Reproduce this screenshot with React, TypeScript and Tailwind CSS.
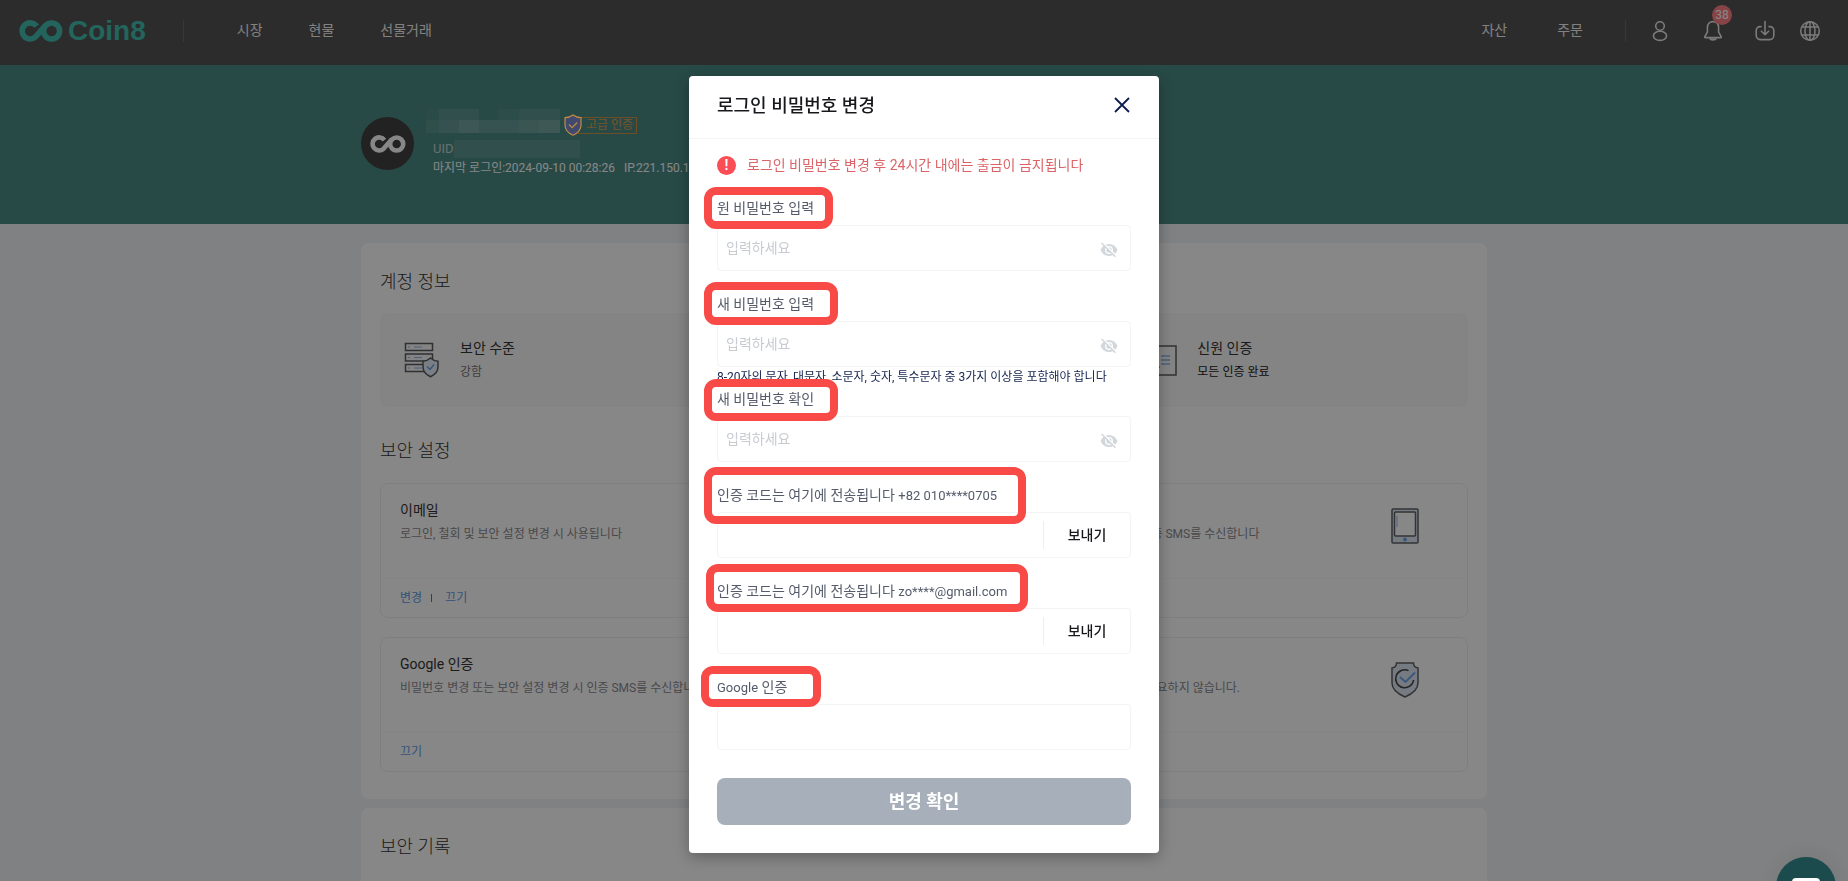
import { ReactNode, useState } from "react";

const passwordFields = [
  {
    id: "old-password",
    label: "원 비밀번호 입력",
    mark: "left-[-13px] top-[-11px] w-[129px] h-[42px]",
  },
  {
    id: "new-password",
    label: "새 비밀번호 입력",
    hint: "8-20자의 문자, 대문자, 소문자, 숫자, 특수문자 중 3가지 이상을 포함해야 합니다",
    mark: "left-[-13px] top-[-12px] w-[134px] h-[43px]",
  },
  {
    id: "confirm-password",
    label: "새 비밀번호 확인",
    mark: "left-[-13px] top-[-10px] w-[134px] h-[42px]",
  },
];

const codeFields = [
  {
    id: "sms-code",
    target: "+82 010****0705",
    mark: "left-[-13px] top-[-18px] w-[322px] h-[57px]",
  },
  {
    id: "email-code",
    target: "zo****@gmail.com",
    mark: "left-[-11px] top-[-17px] w-[322px] h-[48px]",
  },
];

const securityCards = [
  {
    title: "이메일",
    description: "로그인, 철회 및 보안 설정 변경 시 사용됩니다",
    actions: ["변경", "끄기"],
    icon: null,
  },
  {
    title: "휴대폰",
    description: "비밀번호 변경 또는 보안 설정 변경 시 인증 SMS를 수신합니다",
    actions: [],
    icon: "tablet",
  },
  {
    title: "Google 인증",
    description: "비밀번호 변경 또는 보안 설정 변경 시 인증 SMS를 수신합니다",
    actions: ["끄기"],
    icon: null,
  },
  {
    title: "로그인 비밀번호",
    description: "비밀번호는 로그인할 때 쓰이며 인증은 필요하지 않습니다.",
    actions: [],
    icon: "shield",
  },
];

const LogoMark = ({ className }: { className?: string }) => (
  <svg viewBox="0 0 44 22" className={className} fill="none" stroke="currentColor" strokeWidth="5.6">
    <path d="M17.6 6.2A8 8 0 1 0 16.8 16.6L26.4 5.4" strokeLinejoin="round" />
    <circle cx="32.6" cy="11" r="8" />
  </svg>
);

const UserIcon = () => (
  <svg viewBox="0 0 16 22" className="h-[22px] w-4" fill="none" stroke="currentColor" strokeWidth="1.6">
    <circle cx="8" cy="6" r="4.3" />
    <ellipse cx="8" cy="15.8" rx="6.6" ry="4.6" />
  </svg>
);

const BellIcon = () => (
  <svg viewBox="0 0 20 22" className="h-[22px] w-5" fill="none" stroke="currentColor" strokeWidth="1.6" strokeLinejoin="round">
    <path d="M10 1.6c-3.6 0-5.6 2.6-5.6 6v4.6L1.8 16.6c-.3.6 0 1 .6 1h15.2c.6 0 .9-.4.6-1l-2.6-4.4V7.6c0-3.4-2-6-5.600-6z" />
    <path d="M6.600 18.400c1 2.200 5.800 2.200 6.800 0" fill="currentColor" />
  </svg>
);

const DownloadIcon = () => (
  <svg viewBox="0 0 20 22" className="h-[22px] w-5" fill="none" stroke="currentColor" strokeWidth="1.6" strokeLinecap="round">
    <path d="M6 6.600H5a3.800 3.800 0 0 0-3.800 3.800v5.200A4 4 0 0 0 5.200 19.600h9.600a4 4 0 0 0 4-4v-5.200A3.800 3.800 0 0 0 15 6.600h-1" />
    <path d="M10 1.500v13M6.400 11.200l3.600 3.500 3.600-3.500" />
  </svg>
);

const GlobeIcon = () => (
  <svg viewBox="0 0 22 22" className="h-[22px] w-[22px]" fill="none" stroke="currentColor" strokeWidth="1.5">
    <circle cx="11" cy="11" r="9.300" />
    <ellipse cx="11" cy="11" rx="5" ry="9.300" />
    <path d="M2.600 7h16.800M2.600 15h16.800M11 1.700v18.600" />
  </svg>
);

const EyeOffIcon = () => (
  <svg viewBox="0 0 18 18" className="h-[18px] w-[18px]">
    <path d="M.5 9C2.200 5 5.300 3 9 3s6.800 2 8.500 6c-1.700 4-4.800 6-8.500 6S2.200 13 .5 9z" fill="currentColor" />
    <circle cx="9" cy="9" r="3.300" fill="none" stroke="#fff" strokeWidth="1.300" />
    <path d="M2.600 1.200l13.800 13.800" stroke="#fff" strokeWidth="1.500" />
    <path d="M1.600 2l13.800 13.800" stroke="currentColor" strokeWidth="1.500" />
  </svg>
);

const ServerIcon = () => (
  <svg viewBox="0 0 36 36" className="h-9 w-9" fill="none" stroke="#5c5c60" strokeWidth="1.500">
    <path d="M1.500 1.500h27v7h-27zM1.500 12h27v7h-27zM1.500 22.500h27v7h-27z" />
    <path d="M4 5h2M10 5h8M4 15.500h2M10 15.500h8M4 26h2M10 26h8" stroke="#8fb3e8" strokeWidth="1" />
    <path d="M26.500 16c2 2 4.500 3 7.500 3.200v5.300c0 5-3.500 8.500-7.500 10.200-4-1.700-7.500-5.200-7.500-10.200v-5.300c3-.2 5.500-1.200 7.500-3.200z" fill="#e6eefb" />
    <path d="M23 24.500l3 3 4-5" stroke="#6ea3ea" />
  </svg>
);

const IdCardIcon = () => (
  <svg viewBox="0 0 36 36" className="h-9 w-9" fill="none" stroke="#5c5c60" strokeWidth="1.500">
    <path d="M1 4h34v29H1z" />
    <circle cx="11" cy="14" r="4" />
    <path d="M4 26c0-8 14-8 14 0" />
    <path d="M20 14h9M20 18h9M20 22h9" stroke="#8fb3e8" />
  </svg>
);

const TabletIcon = () => (
  <svg viewBox="0 0 28 36" className="h-9 w-7" fill="none" stroke="#606166" strokeWidth="1.500">
    <rect x="1" y="1" width="26" height="34" rx="1" fill="#dfe7f3" />
    <rect x="3.500" y="4" width="21" height="24" rx="1" fill="#fff" />
    <path d="M6 8v11" stroke="#8fb3e8" strokeWidth="1" />
    <circle cx="14" cy="31.500" r="1.200" fill="#6ea3ea" stroke="#6ea3ea" />
  </svg>
);

const ShieldIcon = () => (
  <svg viewBox="0 0 28 36" className="h-9 w-7" fill="none" stroke="#606166" strokeWidth="1.500">
    <path d="M5.500 1h17c0 3 2 4.600 4.500 5v15c0 6-6 11-13 14C7 32 1 27 1 21V6c2.500-.4 4.500-2 4.500-5z" fill="#dfe7f3" />
    <path d="M17.500 8.600A9 9 0 1 0 22.600 18" stroke="#45464a" />
    <path d="M9 15l5.500 5L24 10.500" stroke="#6ea3ea" strokeWidth="1.800" />
  </svg>
);

const SecurityCard = ({ card }: { card: (typeof securityCards)[number] }) => (
  <article className="flex h-[135px] flex-col rounded-lg border border-[#efefef]">
    <div className="flex h-[95px] justify-between border-b border-[#fafafa] pl-[19px] pr-12">
      <div className="pt-4">
        <h3 className="text-sm leading-5 text-[#333]">{card.title}</h3>
        <p className="mt-1 whitespace-nowrap text-xs leading-5 text-[#8b8b90]">{card.description}</p>
      </div>
      <div className="pt-6">
        {card.icon === "tablet" && <TabletIcon />}
        {card.icon === "shield" && <ShieldIcon />}
      </div>
    </div>
    <div className="flex flex-1 items-center pl-[19px] text-xs text-[#5f9ae8]">
      {card.actions.map((action, i) => (
        <div key={action} className="flex items-center">
          {i > 0 && <span className="ml-[9px] mr-[13px] h-2 w-px bg-[#77777b]" />}
          <button type="button">{action}</button>
        </div>
      ))}
    </div>
  </article>
);

const FieldLabel = ({ htmlFor, mark, children }: { htmlFor: string; mark: string; children: ReactNode }) => (
  <div className="relative mb-[7px] h-5 w-fit">
    <label htmlFor={htmlFor} className="block whitespace-nowrap text-sm leading-5 text-[#555b6a]">
      {children}
    </label>
    <span className={`pointer-events-none absolute z-10 rounded-xl border-8 border-[#f84b47] ${mark}`} />
  </div>
);

const PasswordModal = () => {
  const [visible, setVisible] = useState<{ [key: string]: boolean }>({});

  return (
    <div className="fixed inset-0 flex items-start justify-center bg-black/47 pt-[76px]">
      <div role="dialog" aria-labelledby="modal-title" className="w-[470px] rounded bg-white shadow-[0_4px_16px_rgba(0,0,0,0.3)]">
        <div className="flex h-[63px] items-center justify-between border-b border-[#f3f4f5] pb-0.5 pl-7 pr-7">
          <h2 id="modal-title" className="text-lg font-medium text-[#17181c]">로그인 비밀번호 변경</h2>
          <button type="button" aria-label="닫기" className="pb-0.5 text-[#0e1c50]">
            <svg viewBox="0 0 18 18" className="h-[18px] w-[18px]" fill="none" stroke="currentColor" strokeWidth="1.800">
              <path d="M2 2l14 14M16 2L2 16" />
            </svg>
          </button>
        </div>

        <form className="px-7 pb-7 pt-4" onSubmit={(e) => e.preventDefault()}>
          <div className="mb-[23px] flex h-5 items-center gap-[11px] text-sm leading-5 text-[#dc6468]">
            <span className="flex h-[19px] w-[19px] items-center justify-center rounded-full bg-[#fa4d56] font-bold text-white">!</span>
            로그인 비밀번호 변경 후 24시간 내에는 출금이 금지됩니다
          </div>

          {passwordFields.map((field) => (
            <div key={field.id} className={field.hint ? "mb-0.5" : "mb-[23px]"}>
              <FieldLabel htmlFor={field.id} mark={field.mark}>{field.label}</FieldLabel>
              <div className="flex h-[46px] items-center rounded border border-[#f3f4f5] pl-2 pr-3">
                <input
                  id={field.id}
                  type={visible[field.id] ? "text" : "password"}
                  placeholder="입력하세요"
                  className="min-w-0 flex-1 text-sm leading-5 text-[#333] outline-none placeholder:text-[#c8ccd1]"
                />
                <button
                  type="button"
                  aria-label="비밀번호 표시"
                  className="pt-1 text-[#d2d7dc]"
                  onClick={() => setVisible((prev) => ({ ...prev, [field.id]: !prev[field.id] }))}
                >
                  <EyeOffIcon />
                </button>
              </div>
              {field.hint && <p className="whitespace-nowrap text-xs leading-5 text-[#14234f]">{field.hint}</p>}
            </div>
          ))}

          {codeFields.map((field) => (
            <div key={field.id} className="mb-[23px]">
              <FieldLabel htmlFor={field.id} mark={field.mark}>
                인증 코드는 여기에 전송됩니다 <span className="text-[13px]">{field.target}</span>
              </FieldLabel>
              <div className="flex h-[46px] items-center rounded border border-[#f3f4f5]">
                <input id={field.id} type="text" className="min-w-0 flex-1 px-2 text-sm outline-none" />
                <button type="button" className="h-7 w-[87px] border-l border-[#eceeef] text-sm font-medium text-[#17181c]">
                  보내기
                </button>
              </div>
            </div>
          ))}

          <FieldLabel htmlFor="google-code" mark="left-[-16px] top-[-11px] w-[120px] h-[41px]">
            <span className="text-[13px]">Google</span> 인증
          </FieldLabel>
          <input
            id="google-code"
            type="text"
            className="block h-[46px] w-full rounded border border-[#f3f4f5] px-2 text-sm outline-none"
          />

          <button type="submit" className="mt-7 h-[47px] w-full rounded-lg bg-[#a7b0ba] text-lg font-bold text-white">
            변경 확인
          </button>
        </form>
      </div>
    </div>
  );
};

export default function App() {
  return (
    <div className="h-screen overflow-hidden bg-[#f1f3f5] font-['Roboto','Noto_Sans_CJK_KR',sans-serif]">
      <header className="flex h-[65px] items-center bg-[#535353] pb-1 pl-[19px] pr-[27px] text-sm text-[#f3f3f3]">
        <a href="#" className="flex items-center gap-[5px] text-[#42bfb0]">
          <LogoMark className="h-[22px] w-11" />
          <span className="font-['Liberation_Sans',sans-serif] text-[28px] font-bold leading-8">Coin8</span>
        </a>
        <span className="ml-[37px] h-[22px] w-px bg-[#6b6b6b]" />
        <nav className="ml-[53px] flex gap-[46px] pb-0.5">
          <a href="#">시장</a>
          <a href="#">현물</a>
          <a href="#">선물거래</a>
        </nav>
        <nav className="ml-auto flex gap-[50px] pb-0.5">
          <a href="#">자산</a>
          <a href="#">주문</a>
        </nav>
        <span className="ml-[42px] h-[22px] w-px bg-[#6b6b6b]" />
        <div className="ml-[26px] flex items-center text-[#e8e8e8]">
          <button type="button" aria-label="사용자"><UserIcon /></button>
          <button type="button" aria-label="알림" className="relative ml-[35px]">
            <BellIcon />
            <span className="absolute left-[9px] top-[-15px] flex h-5 w-5 items-center justify-center rounded-full bg-[#ff7f82] text-xs text-white">
              38
            </span>
          </button>
          <button type="button" aria-label="다운로드" className="ml-8"><DownloadIcon /></button>
          <button type="button" aria-label="언어" className="ml-6"><GlobeIcon /></button>
        </div>
      </header>

      <section className="h-[159px] bg-[#4b8c86]">
        <div className="mx-auto flex w-full max-w-[1126px] pt-11">
          <div className="mt-2 flex h-[53px] w-[53px] items-center justify-center rounded-full bg-[#414141] text-[#fff]">
            <LogoMark className="h-[18px] w-9" />
          </div>
          <div className="ml-3">
            <div className="flex h-6">
              {/* masked account name */}
              <div className="grid h-6 w-[134px] grid-cols-[13px_20px_20px_20px_20px_20px_21px] grid-rows-[11px_13px]">
                <span className="bg-white/3" />
                <span className="bg-white/10" />
                <span className="bg-white/10" />
                <span />
                <span className="bg-white/6" />
                <span className="bg-white/10" />
                <span className="bg-white/10" />
                <span className="bg-white/8" />
                <span className="bg-white/14" />
                <span className="bg-white/22" />
                <span className="bg-white/16" />
                <span className="bg-white/16" />
                <span className="bg-white/20" />
                <span className="bg-white/24" />
              </div>
              <div className="ml-1 mt-2 flex items-center">
                <svg viewBox="0 0 18 22" className="z-10 h-[22px] w-[18px]" fill="#414a6e" stroke="#c08a45" strokeWidth="1.200">
                  <path d="M9 1c2 1.600 5 2.600 8 2.600V11c0 5-4 8.500-8 10.200C5 19.500 1 16 1 11V3.600C4 3.600 7 2.600 9 1z" />
                  <path d="M5 10.500l3.200 3.200 5-5.200" fill="none" />
                </svg>
                <span className="-ml-1 flex h-[17px] items-center whitespace-nowrap border border-[#d09446] pl-[7px] pr-[3px] text-xs text-[#e0a050]">
                  고급 인증
                </span>
              </div>
            </div>
            <div className="mt-[7px] flex h-[18px] items-center pl-[7px] text-[13px] text-[#c3d3d1]">
              UID
              <span className="h-[18px] w-[126px] bg-white/10" />
            </div>
            <p className="whitespace-pre pl-[7px] text-xs leading-5 text-white">
              마지막 로그인:2024-09-10 00:28:26{"  "} IP.221.150.10.24
            </p>
          </div>
        </div>
      </section>

      <main className="mx-auto mt-[19px] w-full max-w-[1126px]">
        <section className="rounded-lg bg-white px-[19px] pb-[27px] pt-[25px]">
          <h2 className="text-lg font-light leading-7 text-[#333]">계정 정보</h2>
          <div className="mt-[17px] grid h-[94px] grid-cols-3 items-center gap-x-[42px] rounded-lg bg-[#f9f9f9] pl-6">
            <div className="flex items-center gap-5">
              <ServerIcon />
              <div>
                <h3 className="text-sm leading-5 text-[#333]">보안 수준</h3>
                <p className="mt-1 text-xs leading-5 text-[#77777b]">강함</p>
              </div>
            </div>
            <div className="col-start-3 flex items-center gap-5">
              <IdCardIcon />
              <div>
                <h3 className="text-sm leading-5 text-[#333]">신원 인증</h3>
                <p className="mt-1 text-xs leading-5 text-[#222]">모든 인증 완료</p>
              </div>
            </div>
          </div>

          <h2 className="mt-[30px] text-lg font-light leading-7 text-[#333]">보안 설정</h2>
          <div className="mt-[18px] grid grid-cols-2 gap-x-5 gap-y-[19px]">
            {securityCards.map((card) => (
              <SecurityCard key={card.title} card={card} />
            ))}
          </div>
        </section>

        <section className="mt-[9px] h-60 rounded-lg bg-white px-[19px] pt-[25px]">
          <h2 className="text-lg font-light leading-7 text-[#333]">보안 기록</h2>
        </section>
      </main>

      <PasswordModal />

      <button
        type="button"
        aria-label="채팅"
        className="fixed bottom-[-36px] right-3 flex h-[60px] w-[60px] items-center justify-center rounded-full bg-[#1b4b4c] shadow-[0_0_20px_rgba(0,0,0,0.08)]"
      >
        <span className="h-[18px] w-7 rounded bg-white" />
      </button>
    </div>
  );
}
